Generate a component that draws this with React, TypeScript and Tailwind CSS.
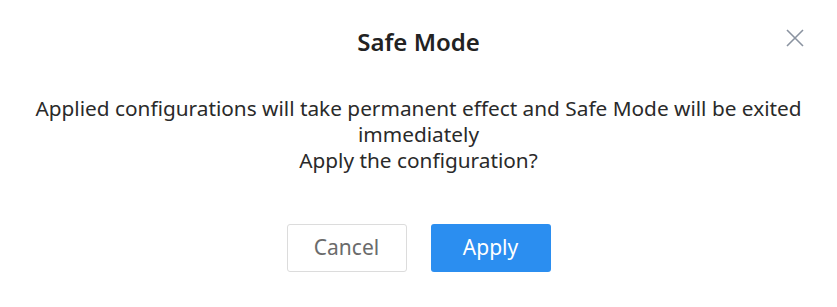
import React from "react";

export default function App() {
  return (
    <div
      className="relative w-[837px] h-[307px] bg-white"
      style={{ fontFamily: '"Noto Sans", sans-serif' }}
    >
      <div className="flex flex-col items-center">
        <div className="mt-[26px] h-[32px] text-[24px] leading-[32px] font-semibold text-[#222]">
          Safe Mode
        </div>
        <div className="mt-[37px] px-[30px] text-center text-[20.8px] leading-[26px] text-[#2a2a2a]">
          Applied configurations will take permanent effect and Safe Mode will be exited immediately
          <br />
          Apply the configuration?
        </div>
        <div className="mt-[51px] flex gap-[24px]">
          <button className="w-[120px] h-[48px] rounded-[3px] border border-[#dcdcdc] bg-white text-[21px] text-[#6b6b6b]">
            Cancel
          </button>
          <button className="w-[120px] h-[48px] rounded-[3px] bg-[#2b8ef0] text-[21px] text-white">
            Apply
          </button>
        </div>
      </div>
      <button className="absolute left-[785px] top-[28px] w-[20px] h-[20px]">
        <svg viewBox="0 0 20 20" width="20" height="20" stroke="#8a93a0" strokeWidth="1.6" fill="none">
          <path d="M2 2L18 18M18 2L2 18" />
        </svg>
      </button>
    </div>
  );
}
